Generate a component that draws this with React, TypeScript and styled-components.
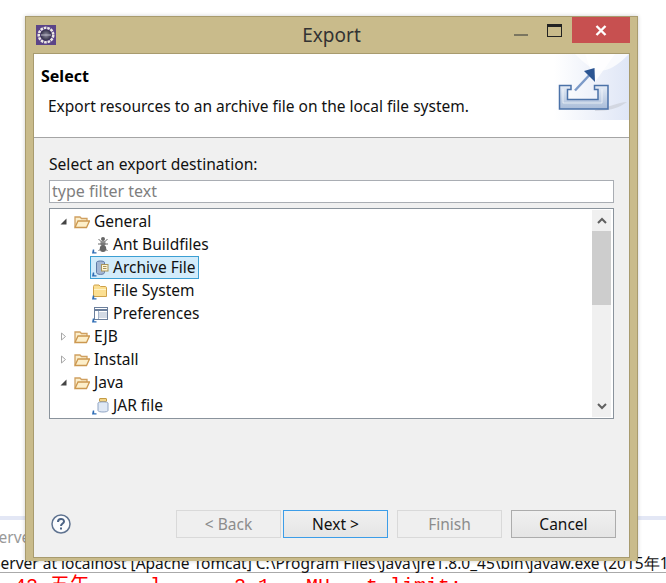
import styled, { createGlobalStyle } from "styled-components";

const GlobalStyle = createGlobalStyle`
  html, body {
    margin: 0;
    padding: 0;
    background: #fff;
  }
  body {
    width: 666px;
    height: 583px;
    overflow: hidden;
    font-family: "Noto Sans", "Open Sans", sans-serif;
    position: relative;
  }
`;

const Backdrop = styled.div`
  height: 583px;
  padding-top: 516px;
  box-sizing: border-box;
  overflow: hidden;
`;

const Stripe = styled.div`
  height: 4px;
  background: #e3e7f5;
`;

const GreyLine = styled.div`
  margin: 8px 0 0 -10px;
  font-size: 15.5px;
  line-height: 18px;
  color: #999;
`;

const ConsoleLine = styled.div`
  margin: 9px 0 0 -8px;
  font-size: 15.5px;
  line-height: 17px;
  color: #111;
  white-space: nowrap;
  border-bottom: 1px solid #aaa;
`;

const RedLine = styled.div`
  margin: 4px 0 0 14px;
  font-family: "Liberation Mono", "Noto Sans CJK SC", monospace;
  font-size: 20px;
  line-height: 20px;
  color: #f00;
  white-space: pre;
`;

const Window = styled.div`
  position: absolute;
  left: 25px;
  top: 16px;
  width: 613px;
  height: 545px;
  box-sizing: border-box;
  background: #c9bb8b;
  border: 1px solid #a89b6e;
  border-bottom-width: 0;
  box-shadow: 0 0 4px rgba(0, 0, 0, 0.2);
  display: flex;
  flex-direction: column;
`;

const TitleBar = styled.div`
  height: 36px;
  flex: none;
  position: relative;
  display: flex;
  align-items: center;
  justify-content: center;
`;

const AppIcon = styled.svg`
  position: absolute;
  left: 10px;
  top: 8px;
  width: 20px;
  height: 20px;
`;

const Title = styled.div`
  font-size: 19px;
  color: #333;
  margin-bottom: 1px;
`;

const WinButtons = styled.div`
  position: absolute;
  right: 7px;
  top: 0;
  display: flex;
  align-items: flex-start;
`;

const MinBtn = styled.div`
  width: 14px;
  height: 2px;
  margin: 17px 19px 0 0;
  background: #7b7660;
`;

const MaxBtn = styled.div`
  width: 13px;
  height: 9px;
  margin: 7px 10px 0 0;
  border: 1px solid #222;
  border-top-width: 3px;
`;

const CloseBtn = styled.div`
  width: 58px;
  height: 26px;
  background: #c75050;
  display: flex;
  align-items: center;
  justify-content: center;
`;

const Client = styled.div`
  flex: 1;
  margin: 0 7px 3px 7px;
  border: 1px solid #a89b6e;
  background: #f0f0f0;
  display: flex;
  flex-direction: column;
`;

const Banner = styled.div`
  height: 84px;
  flex: none;
  box-sizing: border-box;
  background: #fff;
  border-bottom: 1px solid #a5a5a5;
  padding: 11px 0 0 7px;
  position: relative;
`;

const BannerTitle = styled.div`
  font-size: 16px;
  line-height: 22px;
  font-weight: 700;
  color: #000;
`;

const BannerText = styled.div`
  margin: 8px 0 0 7px;
  font-size: 15.5px;
  line-height: 22px;
  color: #111;
`;

const BannerArt = styled.svg`
  position: absolute;
  right: 0;
  top: 0;
  width: 75px;
  height: 66px;
`;

const Body = styled.div`
  flex: 1;
  padding: 15px 15px 0 15px;
  display: flex;
  flex-direction: column;
`;

const FieldLabel = styled.div`
  font-size: 15.6px;
  line-height: 22px;
  color: #111;
`;

const Filter = styled.div`
  height: 23px;
  margin-top: 5px;
  box-sizing: border-box;
  background: #fff;
  border: 1px solid #a9adb3;
  padding-left: 2px;
  font-size: 16px;
  line-height: 20px;
  color: #7f7f7f;
`;

const Tree = styled.div`
  height: 211px;
  margin-top: 5px;
  box-sizing: border-box;
  background: #fff;
  border: 1px solid #8a939c;
  display: flex;
  overflow: hidden;
`;

const Rows = styled.div`
  flex: 1;
  padding-top: 1px;
`;

const Row = styled.div<{ $depth: number }>`
  height: 23px;
  display: flex;
  align-items: center;
  padding-left: ${(p) => (p.$depth === 0 ? 10 : 40)}px;
`;

const Arrow = styled.svg`
  width: 9px;
  height: 9px;
  margin-right: 5px;
  flex: none;
`;

const FolderIcon = styled.svg`
  width: 16px;
  height: 16px;
  flex: none;
  margin-right: 4px;
`;

const ItemIcon = styled.svg`
  width: 18px;
  height: 18px;
  flex: none;
  margin-right: 4px;
`;

const Item = styled.div<{ $selected?: boolean }>`
  height: 23px;
  box-sizing: border-box;
  padding-right: 3px;
  display: flex;
  align-items: center;
  border: 1px solid ${(p) => (p.$selected ? "#3c9fd3" : "transparent")};
  background: ${(p) => (p.$selected ? "#d3ecfb" : "transparent")};
`;

const Label = styled.div`
  font-size: 15.5px;
  line-height: 21px;
  color: #111;
  white-space: nowrap;
`;

const ScrollBar = styled.div`
  width: 19px;
  margin: 1px 2px 1px 0;
  background: #f0f0f0;
  display: flex;
  flex-direction: column;
  align-items: stretch;
`;

const ScrollCap = styled.div`
  height: 21px;
  flex: none;
  display: flex;
  align-items: center;
  justify-content: center;
`;

const ScrollThumb = styled.div`
  height: 74px;
  flex: none;
  background: #cdcdcd;
`;

const ScrollTrack = styled.div`
  flex: 1;
`;

const Footer = styled.div`
  height: 28px;
  margin-top: auto;
  margin-bottom: 19px;
  padding: 0 13px 0 17px;
  display: flex;
  align-items: center;
`;

const HelpIcon = styled.svg`
  width: 20px;
  height: 20px;
  margin-right: 105px;
  flex: none;
`;

const Button = styled.div<{ $variant?: "default" | "disabled"; $gap?: number }>`
  width: 105px;
  height: 28px;
  box-sizing: border-box;
  flex: none;
  margin-right: ${(p) => p.$gap ?? 0}px;
  display: flex;
  align-items: center;
  justify-content: center;
  font-size: 15.5px;
  color: ${(p) => (p.$variant === "disabled" ? "#8c8c8c" : "#111")};
  border: 1px solid
    ${(p) =>
      p.$variant === "disabled" ? "#d9d9d9" : p.$variant === "default" ? "#3c9de8" : "#acacac"};
  background: ${(p) =>
    p.$variant === "disabled" ? "#efefef" : "linear-gradient(#f0f0f0, #e5e5e5)"};
`;

function Folder() {
  return (
    <FolderIcon viewBox="0 0 16 16">
      <path d="M1 13V3h5l1.500 1.500h5.500v2.500" fill="#fbeecb" stroke="#d0a060" strokeWidth="1.300" />
      <path d="M1 13.500l3-6.500h11.500l-3 6.500z" fill="#fdefca" stroke="#cc9850" strokeWidth="1.300" />
    </FolderIcon>
  );
}

function ExpandArrow({ open }: { open: boolean }) {
  return (
    <Arrow viewBox="0 0 9 9">
      {open ? (
        <path d="M6.500 1.500v6h-6z" fill="#444" />
      ) : (
        <path d="M1.500 1v7L5.500 4.500z" fill="#fff" stroke="#a6a6a6" />
      )}
    </Arrow>
  );
}

// small blue corner shared by all the wizard entries
function WizardMark() {
  return <path d="M1 17.500h4.500v-1.200H3.200v-2.800H1.800z" fill="#2f6db5" />;
}

function AntIcon() {
  return (
    <ItemIcon viewBox="0 0 18 18">
      <circle cx="12" cy="3" r="2" fill="#666" />
      <ellipse cx="12" cy="7.500" rx="2.600" ry="2.400" fill="#8a8a8a" />
      <ellipse cx="12" cy="12.500" rx="3.200" ry="3.500" fill="#666" />
      <path d="M7.500 3l3 3M16.500 3l-3 3M7 8h5M17 8h-5M7.500 15l3-3M16.500 15l-3-3" stroke="#666" fill="none" />
      <WizardMark />
    </ItemIcon>
  );
}

function ArchiveIcon() {
  return (
    <ItemIcon viewBox="0 0 18 18">
      <path d="M5.500 3.500C5.500 1.500 13.500 1.500 13.500 3.500v10c0 2.500-8 2.500-8 0z" fill="#a4b7d4" stroke="#5f7aa6" />
      <rect x="10.500" y="5.500" width="6.500" height="6.500" fill="#fdf6da" stroke="#a9955a" />
      <path d="M12 7.500h3.500M12 9.500h3.500" stroke="#a9955a" />
      <WizardMark />
    </ItemIcon>
  );
}

function FileSystemIcon() {
  return (
    <ItemIcon viewBox="0 0 18 18">
      <path d="M2.500 14.500V4.500C2.500 3.500 3 3 4 3h4l1.500 1.500H14c1 0 1.500.5 1.500 1.500v8.500z" fill="#fbdf92" stroke="#cfa24a" />
      <path d="M3 7.500h12" stroke="#fff3c8" />
      <WizardMark />
    </ItemIcon>
  );
}

function PrefsIcon() {
  return (
    <ItemIcon viewBox="0 0 18 18">
      <rect x="3.500" y="2.500" width="13" height="12" fill="#fff" stroke="#6b7f9c" />
      <path d="M3.500 5h13" stroke="#6b7f9c" strokeWidth="2" />
      <path d="M7.500 6v8M8 8h8M8 10h8M8 12h8" stroke="#a5b4c9" />
      <WizardMark />
    </ItemIcon>
  );
}

function JarIcon() {
  return (
    <ItemIcon viewBox="0 0 18 18">
      <rect x="8.500" y="1.500" width="7" height="3" rx="0.500" fill="#f1d487" stroke="#c49b45" />
      <path d="M7 6c0-1.500 10-1.500 10 0v7.500c0 2-10 2-10 0z" fill="#dfe8f5" stroke="#90a5c4" />
      <WizardMark />
    </ItemIcon>
  );
}

const App = () => {
  return (
    <>
      <GlobalStyle />
      <Backdrop>
        <Stripe />
        <GreyLine>Server</GreyLine>
        <ConsoleLine>
          Server at localhost [Apache Tomcat] C:\Program Files\Java\jre1.8.0_45\bin\javaw.exe (2015年1
        </ConsoleLine>
        <RedLine>{"42 五午     l      2.1   MH   t limit;"}</RedLine>
      </Backdrop>
      <Window>
        <TitleBar>
          <AppIcon viewBox="0 0 20 20">
            <defs>
              <radialGradient id="hub">
                <stop offset="0" stopColor="#8f8d9e" />
                <stop offset="1" stopColor="#2f2b45" />
              </radialGradient>
            </defs>
            <rect width="20" height="20" fill="#5b4488" />
            <circle cx="10" cy="10" r="7.200" fill="none" stroke="#ece9e4" strokeWidth="2.600" strokeDasharray="2.600 0.900" />
            <circle cx="10" cy="10" r="5.600" fill="url(#hub)" />
            <path d="M5 10h10" stroke="#b9b6c6" />
          </AppIcon>
          <Title>Export</Title>
          <WinButtons>
            <MinBtn />
            <MaxBtn />
            <CloseBtn>
              <svg width="12" height="11" viewBox="0 0 12 11">
                <path d="M1.500 1l9 9M10.500 1l-9 9" stroke="#fff" strokeWidth="2.400" />
              </svg>
            </CloseBtn>
          </WinButtons>
        </TitleBar>
        <Client>
          <Banner>
            <BannerTitle>Select</BannerTitle>
            <BannerText>Export resources to an archive file on the local file system.</BannerText>
            <BannerArt viewBox="-1 0 75 66">
              <defs>
                <linearGradient id="sky" x1="0" y1="0" x2="1" y2="0">
                  <stop offset="0" stopColor="#fff" />
                  <stop offset="1" stopColor="#dfe6f6" />
                </linearGradient>
                <linearGradient id="tray" x1="0" y1="0" x2="0" y2="1">
                  <stop offset="0" stopColor="#e6edf7" />
                  <stop offset="1" stopColor="#a9bcd8" />
                </linearGradient>
              </defs>
              <rect x="-1" width="75" height="66" fill="url(#sky)" />
              <path d="M20 0C40 20 50 24 74 0H20z" fill="#fff" fillOpacity="0.750" />
              <path d="M30 0h30L40 28z" fill="#fff" fillOpacity="0.800" />
              <path d="M40 56c12-2 24-8 32-8-8 6-18 9-32 9z" fill="#c7c9d2" fillOpacity="0.600" />
              <path d="M4.500 31.500h11.500v4h-3.500v10h30.500v-10h-3.500v-4h13.500v23.500H4.500z" fill="url(#tray)" stroke="#4b72a8" strokeWidth="1.500" />
              <path d="M8 35v14h39V35" fill="none" stroke="#fff" strokeOpacity="0.600" />
              <path d="M20 36.500L34 21.500" stroke="#7c9ac8" strokeWidth="2.500" />
              <path d="M39.500 14l-10.500 3 11 11z" fill="#2b5592" />
            </BannerArt>
          </Banner>
          <Body>
            <FieldLabel>Select an export destination:</FieldLabel>
            <Filter>type filter text</Filter>
            <Tree>
              <Rows>
                <Row $depth={0}>
                  <ExpandArrow open />
                  <Folder />
                  <Label>General</Label>
                </Row>
                <Row $depth={1}>
                  <Item>
                    <AntIcon />
                    <Label>Ant Buildfiles</Label>
                  </Item>
                </Row>
                <Row $depth={1}>
                  <Item $selected>
                    <ArchiveIcon />
                    <Label>Archive File</Label>
                  </Item>
                </Row>
                <Row $depth={1}>
                  <Item>
                    <FileSystemIcon />
                    <Label>File System</Label>
                  </Item>
                </Row>
                <Row $depth={1}>
                  <Item>
                    <PrefsIcon />
                    <Label>Preferences</Label>
                  </Item>
                </Row>
                <Row $depth={0}>
                  <ExpandArrow open={false} />
                  <Folder />
                  <Label>EJB</Label>
                </Row>
                <Row $depth={0}>
                  <ExpandArrow open={false} />
                  <Folder />
                  <Label>Install</Label>
                </Row>
                <Row $depth={0}>
                  <ExpandArrow open />
                  <Folder />
                  <Label>Java</Label>
                </Row>
                <Row $depth={1}>
                  <Item>
                    <JarIcon />
                    <Label>JAR file</Label>
                  </Item>
                </Row>
              </Rows>
              <ScrollBar>
                <ScrollCap>
                  <svg width="10" height="7" viewBox="0 0 10 7">
                    <path d="M1 6l4-4 4 4" fill="none" stroke="#606060" strokeWidth="2" />
                  </svg>
                </ScrollCap>
                <ScrollThumb />
                <ScrollTrack />
                <ScrollCap>
                  <svg width="10" height="7" viewBox="0 0 10 7">
                    <path d="M1 1l4 4 4-4" fill="none" stroke="#606060" strokeWidth="2" />
                  </svg>
                </ScrollCap>
              </ScrollBar>
            </Tree>
          </Body>
          <Footer>
            <HelpIcon viewBox="0 0 20 20">
              <circle cx="10" cy="10" r="9" fill="#fbfcfe" stroke="#5f7390" strokeWidth="1.500" />
              <path d="M7 8c0-4 6-4 6-.5 0 2-3 2-3 4.500" fill="none" stroke="#4b6385" strokeWidth="2" />
              <rect x="9" y="13.500" width="2" height="2" fill="#4b6385" />
            </HelpIcon>
            <Button $variant="disabled" $gap={2}>&lt; Back</Button>
            <Button $variant="default" $gap={9}>Next &gt;</Button>
            <Button $variant="disabled" $gap={9}>Finish</Button>
            <Button>Cancel</Button>
          </Footer>
        </Client>
      </Window>
    </>
  );
};

export default App;
